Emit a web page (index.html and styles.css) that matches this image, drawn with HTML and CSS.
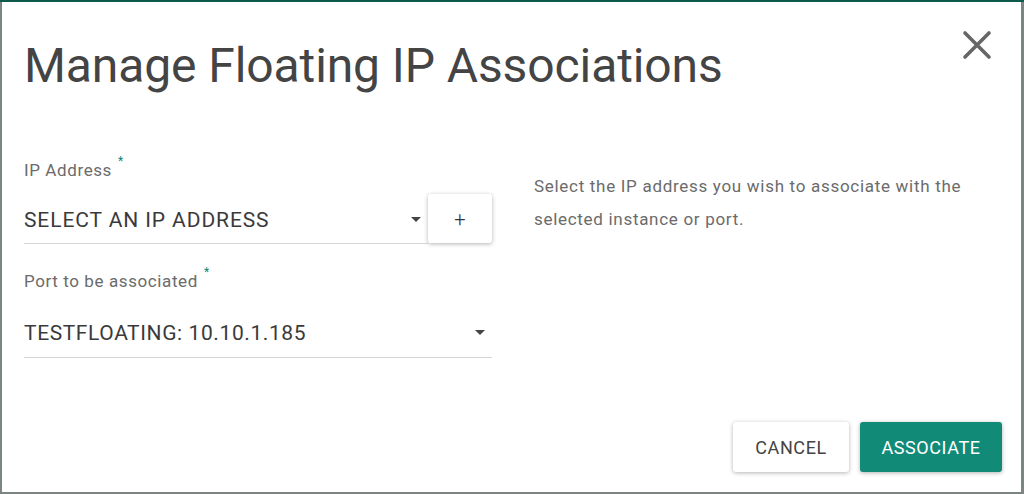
FILE: index.html
```html
<!DOCTYPE html>
<html>
<head>
<meta charset="utf-8">
<link rel="stylesheet" href="styles.css">
</head>
<body>
<div class="dialog">
  <div class="header">
    <h1 class="title">Manage Floating IP Associations</h1>
    <button class="close" aria-label="Close">
      <svg width="30" height="30" viewBox="0 0 30 30"><path d="M3 3 L27 27 M27 3 L3 27" stroke="#666" stroke-width="3.6" stroke-linecap="round" fill="none"/></svg>
    </button>
  </div>
  <div class="body">
    <div class="form">
      <div class="field">
        <label class="label">IP Address<span class="req">*</span></label>
        <div class="row">
          <div class="select">
            <span class="value">SELECT AN IP ADDRESS</span>
            <span class="caret"></span>
          </div>
          <button class="plus">+</button>
        </div>
      </div>
      <div class="field second">
        <label class="label">Port to be associated<span class="req">*</span></label>
        <div class="select full">
          <span class="value tight">TESTFLOATING: 10.10.1.185</span>
          <span class="caret"></span>
        </div>
      </div>
    </div>
    <p class="help">Select the IP address you wish to associate with the selected instance or port.</p>
  </div>
  <div class="footer">
    <button class="btn cancel">CANCEL</button>
    <button class="btn primary">ASSOCIATE</button>
  </div>
</div>
</body>
</html>
```

FILE: styles.css
```css
html, body {
  margin: 0;
  padding: 0;
  height: 494px;
  overflow: hidden;
}
body {
  background: #7d8583;
  border-top: 2px solid #0d5a4c;
  box-sizing: border-box;
  padding: 0 3px 2px 2px;
  font-family: Roboto, "Liberation Sans", sans-serif;
}
.dialog {
  background: #fff;
  height: 490px;
  box-sizing: border-box;
  padding: 0 19px 0 22px;
  display: flex;
  flex-direction: column;
}
.header {
  display: flex;
  justify-content: space-between;
  align-items: flex-start;
}
.title {
  margin: 36px 0 0 0;
  font-size: 48px;
  font-weight: 400;
  color: #444;
  line-height: 56px;
  letter-spacing: -0.1px;
}
.close {
  border: 0;
  background: none;
  padding: 0;
  margin: 28px 10px 0 0;
  width: 30px;
  height: 30px;
}
.body {
  display: flex;
  margin-top: 66px;
}
.form {
  width: 468px;
  flex: none;
}
.label {
  display: block;
  font-size: 17px;
  letter-spacing: 0.6px;
  color: #6b6b6b;
  line-height: 20px;
}
.req {
  color: #00897b;
  font-size: 12px;
  vertical-align: top;
  position: relative;
  top: -9px;
  margin-left: 6px;
}
.row {
  display: flex;
  align-items: flex-end;
  margin-top: 14px;
}
.select {
  flex: 1;
  display: flex;
  align-items: center;
  justify-content: space-between;
  height: 48px;
  border-bottom: 1px solid #d6d6d6;
  box-sizing: border-box;
  padding-right: 7px;
}
.select.full {
  margin-top: 17px;
  height: 50px;
}
.value {
  font-size: 21px;
  color: #3a3a3a;
  letter-spacing: 0.9px;
}
.value.tight {
  letter-spacing: 0.6px;
}
.caret {
  width: 0;
  height: 0;
  border-left: 5px solid transparent;
  border-right: 5px solid transparent;
  border-top: 5px solid #444;
}
.plus {
  width: 64px;
  height: 49px;
  border: 0;
  background: #fff;
  border-radius: 3px;
  box-shadow: 0 1px 4px rgba(0,0,0,0.3);
  font-size: 20px;
  font-weight: 300;
  color: #333;
  font-family: Roboto, "Liberation Sans", sans-serif;
  margin-bottom: 1px;
}
.field.second {
  margin-top: 27px;
}
.help {
  margin: 10px 0 0 42px;
  font-size: 17px;
  letter-spacing: 0.7px;
  line-height: 33px;
  color: #6b6b6b;
  width: 450px;
}
.footer {
  margin-top: auto;
  margin-bottom: 20px;
  display: flex;
  justify-content: flex-end;
  gap: 11px;
}
.btn {
  height: 50px;
  border: 0;
  border-radius: 3px;
  font-family: Roboto, "Liberation Sans", sans-serif;
  font-size: 18px;
  letter-spacing: 0.6px;
  padding: 0;
  box-shadow: 0 1px 4px rgba(0,0,0,0.3);
}
.cancel {
  background: #fff;
  color: #444;
  width: 116px;
}
.primary {
  background: #128a78;
  color: #fff;
  width: 142px;
}
```
